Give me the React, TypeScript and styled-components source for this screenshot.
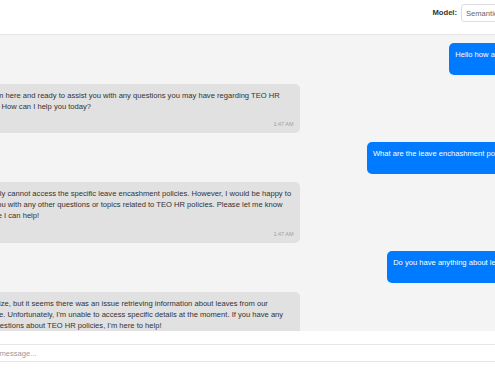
import styled, { createGlobalStyle } from 'styled-components';

type Role = 'user' | 'bot';

type MessageType = {
    role: Role;
    text: string;
    time: string;
};

type RoleProps = {
    $role: Role;
};

const messages: MessageType[] = [
    { role: 'user', text: 'Hello how are you', time: '1:47 AM' },
    {
        role: 'bot',
        text: "Hello! I'm here and ready to assist you with any questions you may have regarding TEO HR policies. How can I help you today?",
        time: '1:47 AM',
    },
    { role: 'user', text: 'What are the leave enchashment policies?', time: '1:47 AM' },
    {
        role: 'bot',
        text: 'I currently cannot access the specific leave encashment policies. However, I would be happy to assist you with any other questions or topics related to TEO HR policies. Please let me know\nhow else I can help!',
        time: '1:47 AM',
    },
    { role: 'user', text: 'Do you have anything about leaves?', time: '1:48 AM' },
    {
        role: 'bot',
        text: "I apologize, but it seems there was an issue retrieving information about leaves from our database. Unfortunately, I'm unable to access specific details at the moment. If you have any other questions about TEO HR policies, I'm here to help!",
        time: '1:48 AM',
    },
];

const GlobalStyle = createGlobalStyle`
    html, body {
        margin: 0;
        padding: 0;
        overflow: hidden;
        background: #ffffff;
    }
    body {
        font-family: 'Liberation Sans', Arial, sans-serif;
    }
`;

function App() {
    return (
        <>
            <GlobalStyle />
            <Page>
                <Header>
                    <ModelLabel>Model:</ModelLabel>
                    <ModelSelect defaultValue="semantic">
                        <option value="semantic">Semantic Search</option>
                        <option value="keyword">Keyword Search</option>
                    </ModelSelect>
                </Header>
                <ChatArea>
                    {messages.map((m, i) => (
                        <Bubble key={i} $role={m.role}>
                            <BubbleText>{m.text}</BubbleText>
                            <Time $role={m.role}>{m.time}</Time>
                        </Bubble>
                    ))}
                </ChatArea>
                <InputBar>
                    <MessageInput placeholder="Type your message..." />
                </InputBar>
            </Page>
        </>
    );
}

export default App;

const Page = styled.div`
    width: 572px;
    margin-left: -42px;
    display: flex;
    flex-direction: column;
`;

const Header = styled.header`
    height: 35px;
    padding-top: 4px;
    box-sizing: border-box;
    display: flex;
    justify-content: flex-end;
    align-items: flex-start;
    gap: 4px;
    background: #ffffff;
    border-bottom: 1px solid #e4e4e4;
`;

const ModelLabel = styled.label`
    height: 18px;
    line-height: 18px;
    font-size: 7.6px;
    font-weight: bold;
    color: #333333;
`;

const ModelSelect = styled.select`
    appearance: none;
    width: 69px;
    height: 18px;
    box-sizing: border-box;
    padding: 0 4px;
    border: 1px solid #dddddd;
    border-radius: 3px;
    background: #ffffff;
    font-family: 'Liberation Sans', Arial, sans-serif;
    font-size: 7.6px;
    color: #666666;
    outline: none;
`;

const ChatArea = styled.main`
    height: 296px;
    box-sizing: border-box;
    padding: 8px;
    display: flex;
    flex-direction: column;
    gap: 8.5px;
    overflow: hidden;
    background: #f4f4f4;
`;

const Bubble = styled.div<RoleProps>`
    flex-shrink: 0;
    max-width: 60%;
    box-sizing: border-box;
    padding: 6px;
    border-radius: 5px;
    align-self: ${(props) => (props.$role === 'user' ? 'flex-end' : 'flex-start')};
    background: ${(props) => (props.$role === 'user' ? '#007bff' : '#e1e1e1')};
    color: ${(props) => (props.$role === 'user' ? '#ffffff' : '#333333')};
`;

const BubbleText = styled.div`
    font-size: 7.6px;
    line-height: 11px;
    white-space: pre-line;
`;

const Time = styled.div<RoleProps>`
    margin-top: ${(props) => (props.$role === 'user' ? '3px' : '9.5px')};
    font-size: 5.5px;
    line-height: 6px;
    text-align: right;
    color: ${(props) => (props.$role === 'user' ? 'rgba(255,255,255,0.7)' : '#a0a0a0')};
`;

const InputBar = styled.footer`
    padding: 13px 0;
    display: flex;
    background: #ffffff;
`;

const MessageInput = styled.input`
    flex: 1;
    height: 18px;
    box-sizing: border-box;
    padding: 0 5px;
    border: 1px solid #e6e6e6;
    border-radius: 3px;
    font-family: 'Liberation Sans', Arial, sans-serif;
    font-size: 7.6px;
    color: #333333;
    outline: none;

    &::placeholder {
        color: #9a9a9a;
    }
`;
